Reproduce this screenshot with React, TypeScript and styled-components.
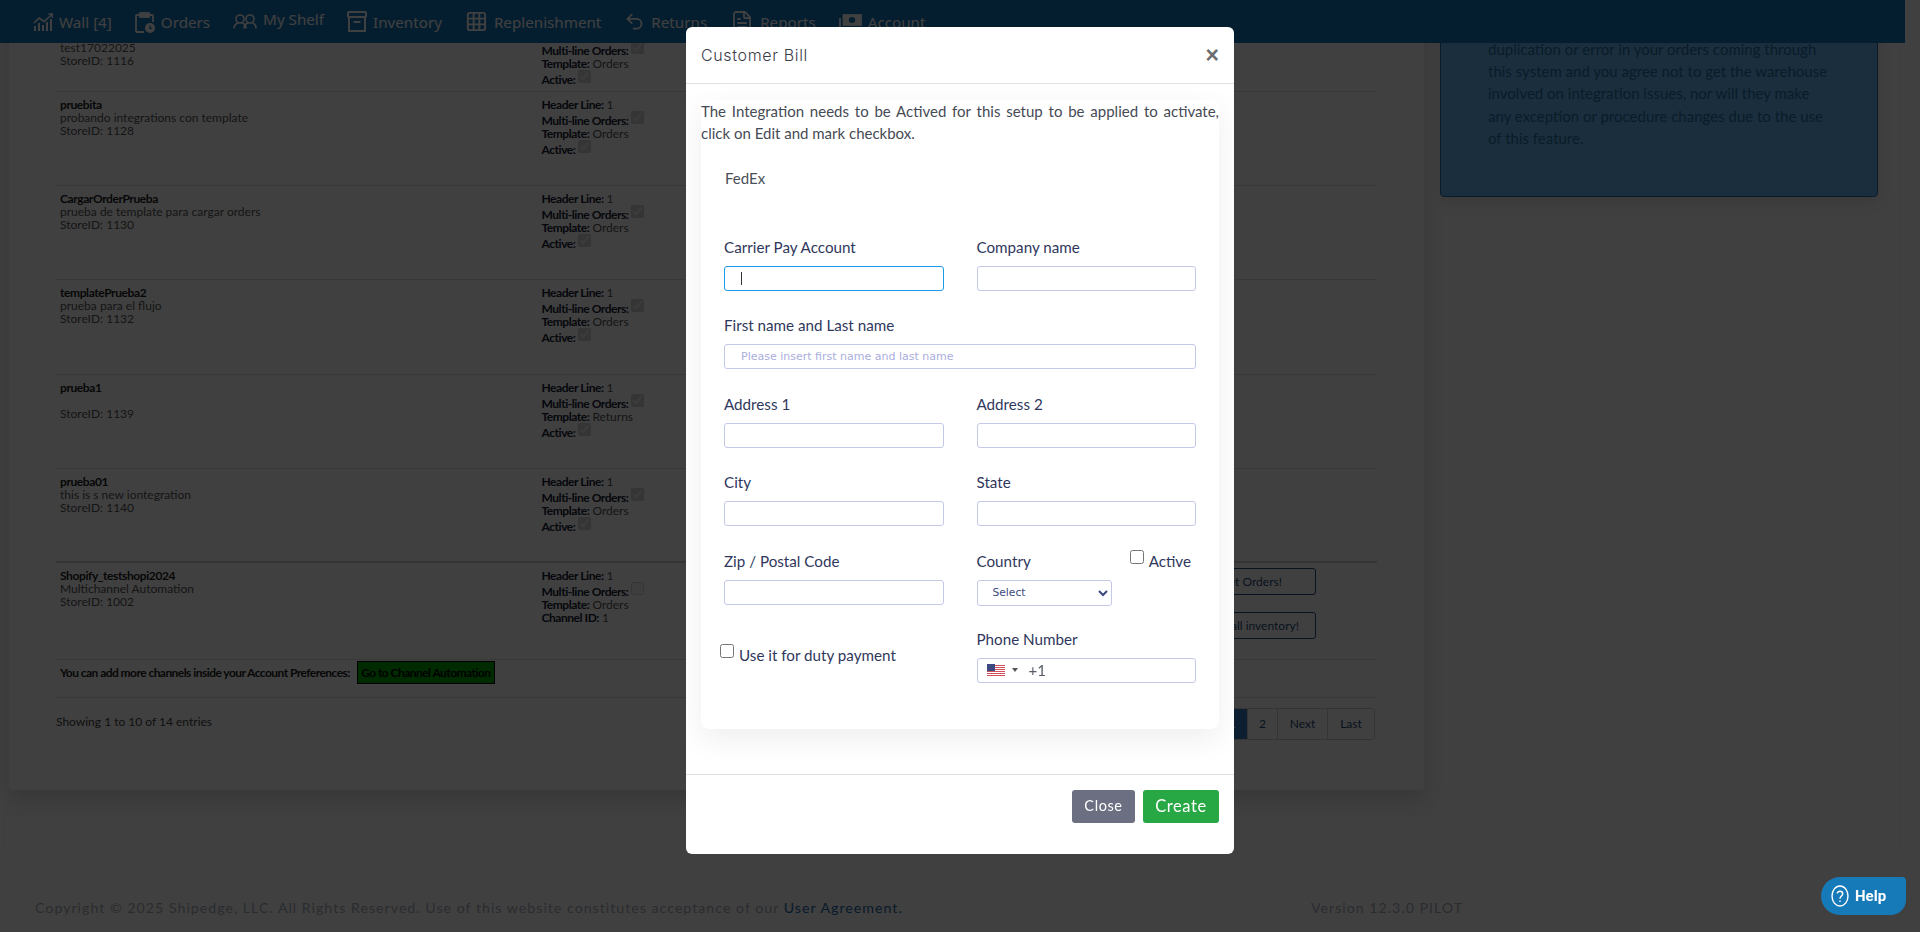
import React from "react"
import styled, { createGlobalStyle } from "styled-components"
import { Undo2, FileText, Grid3x3 } from "lucide-react"

const GlobalStyle = createGlobalStyle`
    html, body {
        margin: 0;
        padding: 0;
        height: 932px;
        overflow: hidden;
        background: #ffffff;
        font-family: "Lato", "Liberation Sans", sans-serif;
    }
    * { box-sizing: border-box; }
`

const Page = styled.div`
    width: 1905px;
    height: 932px;
    overflow: hidden;
`

const NavBar = styled.nav`
    position: fixed;
    top: 0;
    left: 0;
    width: 1905px;
    height: 43px;
    background: #1478bc;
    display: flex;
    align-items: center;
    padding-left: 21.5px;
    z-index: 1;
`

const NavItem = styled.a<{ $raised?: boolean }>`
    display: flex;
    align-items: center;
    gap: 6px;
    padding: 0 11.5px;
    color: #ffffff;
    font-family: "Noto Sans", sans-serif;
    font-size: 15.2px;
    white-space: nowrap;

    span {
        position: relative;
        top: ${props => props.$raised ? "-3px" : "0"};
    }
    svg {
        flex: none;
    }
`

const Panel = styled.div`
    margin: -100px 0 0 5px;
    width: 1894px;
    padding: 4px 21px 66px 4px;
    background: #fdfdfd;
    border-radius: 6px;
    display: grid;
    grid-template-columns: 1415px 438px;
    column-gap: 16px;
    align-items: start;
    box-shadow: 0 0 4px rgba(0, 0, 0, 0.05);
`

const ListCard = styled.section`
    background: #ffffff;
    border-radius: 4px;
    padding: 118px 47px 50px 47px;
    box-shadow: 0 10px 20px rgba(0, 0, 0, 0.14);
`

const Row = styled.div<{ $height: number; $strong?: boolean }>`
    height: ${props => props.$height}px;
    display: grid;
    grid-template-columns: 481.5px 1fr 130px;
    padding: 6px 61px 0 4px;
    border-bottom: ${props => props.$strong ? "2px solid #d4d4d4" : "1px solid #dddddd"};
    font-size: 12px;
    line-height: 13px;
    color: #222222;
`

const StoreName = styled.div`
    font-weight: 700;
    letter-spacing: -0.4px;
    color: #1c1c1c;
`

const Muted = styled.div`
    color: #555555;
    min-height: 13px;
`

const Detail = styled.div<{ $tall?: boolean }>`
    height: ${props => props.$tall ? "16px" : "13px"};
    display: flex;
    align-items: ${props => props.$tall ? "flex-end" : "center"};
    color: #555555;

    b {
        color: #162033;
        margin-right: 3px;
        letter-spacing: -0.45px;
    }
`

const TinyCheck = styled.input.attrs({ type: "checkbox", disabled: true })`
    width: 13px;
    height: 13px;
    margin: 0 0 3px 0;
    align-self: flex-start;
`

const RowActions = styled.div`
    display: flex;
    flex-direction: column;
    gap: 17px;
    margin-top: -1px;
`

const OutlineButton = styled.button`
    height: 27px;
    width: 130px;
    padding: 0;
    background: #ffffff;
    border: 1px solid #1f4b78;
    border-radius: 3px;
    color: #1f4b78;
    font-family: inherit;
    font-size: 12px;
`

const PrefsRow = styled.div`
    height: 38px;
    display: flex;
    align-items: flex-start;
    gap: 7px;
    padding: 1px 0 0 4px;
    border-bottom: 1px solid #dddddd;
    font-size: 12px;
    font-weight: 700;
    letter-spacing: -0.55px;
    line-height: 23px;
    color: #222222;
`

const GreenLink = styled.a`
    height: 23px;
    width: 138px;
    background: #00aa00;
    border: 1px solid #000000;
    color: #000000;
    text-align: center;
    line-height: 21px;
    white-space: nowrap;
    font-weight: 700;
`

const TableFoot = styled.div`
    display: flex;
    justify-content: space-between;
    align-items: flex-start;
    padding: 10px 2px 0 0;
    font-size: 12px;
`

const Showing = styled.div`
    color: #444444;
    line-height: 28px;
`

const Pager = styled.div`
    display: flex;
    height: 32px;
    border: 1px solid #cfcfcf;
    border-radius: 4px;
`

const PageLink = styled.a<{ $active?: boolean; $width: number }>`
    width: ${props => props.$width}px;
    display: flex;
    align-items: center;
    justify-content: center;
    color: ${props => props.$active ? "#ffffff" : "#1f4b78"};
    background: ${props => props.$active ? "#347ac0" : "transparent"};
    border-right: 1px solid #cfcfcf;

    &:last-child {
        border-right: 0;
    }
`

const InfoBox = styled.aside`
    margin-top: 56px;
    background: #68b8f8;
    border: 1px solid #2c6aa8;
    border-radius: 4px;
    padding: 77px 40px 47px 47px;
    font-size: 15px;
    line-height: 22.2px;
    color: #28709f;
    white-space: nowrap;
    box-shadow: 0 6px 14px rgba(0, 0, 0, 0.1);
`

const Footer = styled.footer`
    display: grid;
    grid-template-columns: 1276px 1fr;
    padding: 41px 0 0 35px;
    font-size: 14.2px;
    line-height: 22px;
    letter-spacing: 1px;
    color: #a8b0bc;

    a {
        color: #1f6aa8;
    }
`

const Backdrop = styled.div`
    position: fixed;
    inset: 0;
    background: rgba(0, 0, 0, 0.75);
    z-index: 2;
`

const HelpButton = styled.button`
    position: fixed;
    left: 1821px;
    top: 877px;
    width: 85px;
    height: 38px;
    display: flex;
    align-items: center;
    gap: 6px;
    padding: 0 0 0 10px;
    border: 0;
    border-radius: 20px 4px 16px 20px;
    background: #1679b8;
    color: #ffffff;
    font-family: "Roboto", "Liberation Sans", sans-serif;
    font-size: 15px;
    font-weight: 700;
    z-index: 3;
`

const Modal = styled.div`
    position: fixed;
    top: 27px;
    left: 686px;
    width: 548px;
    height: 827px;
    background: #ffffff;
    border-radius: 6px;
    z-index: 4;
    display: flex;
    flex-direction: column;
`

const ModalHeader = styled.header`
    height: 57px;
    flex: none;
    display: flex;
    align-items: center;
    justify-content: space-between;
    padding: 0 15px;
    border-bottom: 1px solid #dee2e6;
`

const ModalTitle = styled.h5`
    margin: 0;
    font-family: "Inter", sans-serif;
    font-size: 16px;
    font-weight: 300;
    letter-spacing: 0.65px;
    color: #3c3c48;
`

const CloseGlyph = styled.span`
    font-family: "Liberation Sans", sans-serif;
    font-size: 23px;
    font-weight: 700;
    line-height: 1;
    color: #6d6d6d;
`

const ModalBody = styled.div`
    flex: 1;
    padding: 16px 15px 0;
    border-bottom: 1px solid #dee2e6;
`

const FormCard = styled.div`
    height: 629px;
    border-radius: 8px;
    background: #ffffff;
    box-shadow: 0 10px 30px rgba(0, 0, 0, 0.07);
`

const Notice = styled.p`
    margin: 0;
    font-size: 15px;
    line-height: 22px;
    text-align: justify;
    color: #464a55;
`

const Carrier = styled.div`
    padding: 23px 0 47px 24px;
    font-size: 15px;
    line-height: 22px;
    color: #495057;
`

const FormGrid = styled.div`
    display: grid;
    grid-template-columns: 219.5px 219.5px;
    column-gap: 33px;
    padding: 0 23px;
`

const Field = styled.div<{ $wide?: boolean }>`
    height: 78.4px;
    grid-column: ${props => props.$wide ? "1 / -1" : "auto"};
`

const Label = styled.label`
    display: block;
    margin-bottom: 8px;
    font-size: 15.2px;
    line-height: 22px;
    color: #2f375c;
    white-space: nowrap;
`

const TextInput = styled.input<{ $focused?: boolean }>`
    display: block;
    width: 100%;
    height: 25px;
    padding: 0 16px;
    background: #ffffff;
    border: 1px solid ${props => props.$focused ? "#1a9be8" : "#c5c9e8"};
    border-radius: 3px;
    outline: 0;
    font-family: "DejaVu Sans", sans-serif;
    font-size: 11px;

    &::placeholder {
        color: #a9aedd;
        opacity: 1;
    }
`

const InputCaretWrap = styled.div`
    position: relative;

    &::after {
        content: "";
        position: absolute;
        left: 17px;
        top: 6px;
        width: 1px;
        height: 13px;
        background: #333333;
    }
`

const CountryCell = styled.div`
    display: flex;
    justify-content: space-between;
    height: 78.4px;
`

const CountrySelect = styled.select`
    display: block;
    width: 135px;
    height: 26px;
    padding: 0 0 0 11px;
    background: #ffffff;
    border: 1px solid #c5c9e8;
    border-radius: 3px;
    font-family: "DejaVu Sans", sans-serif;
    font-size: 10.7px;
    color: #3b4a80;
`

const ActiveLabel = styled.label`
    display: flex;
    align-items: flex-start;
    gap: 5px;
    padding: 0 5px 0 0;
    font-size: 15.2px;
    line-height: 22px;
    color: #2f375c;
`

const PlainCheck = styled.input.attrs({ type: "checkbox" })`
    width: 14px;
    height: 14px;
    margin: 0;
`

const DutyCell = styled.label`
    display: flex;
    align-items: flex-start;
    gap: 5px;
    height: 78.4px;
    margin-left: -4px;
    padding-top: 16px;
    font-size: 15.2px;
    line-height: 22px;
    color: #2f375c;
`

const PhoneBox = styled.div`
    height: 25px;
    display: flex;
    align-items: center;
    padding-left: 9px;
    border: 1px solid #c5c9e8;
    border-radius: 3px;
    font-size: 15px;
    color: #555a66;
`

const FlagCaret = styled.span`
    width: 0;
    height: 0;
    margin: 0 11px 0 7px;
    border-left: 3px solid transparent;
    border-right: 3px solid transparent;
    border-top: 4px solid #555555;
`

const ModalFooter = styled.footer`
    height: 79px;
    flex: none;
    display: flex;
    justify-content: flex-end;
    gap: 8px;
    padding: 15px 15px 0;
`

const FooterButton = styled.button<{ $primary?: boolean }>`
    height: 33px;
    width: ${props => props.$primary ? "76px" : "63px"};
    padding: 0 0 2px;
    border: 0;
    border-radius: 3px;
    background: ${props => props.$primary ? "#28a745" : "#6c6f82"};
    color: #ffffff;
    font-family: "Lato", sans-serif;
    font-size: ${props => props.$primary ? "16.5px" : "14.5px"};
    letter-spacing: 0.6px;
`

function WallIcon() {
    return (
        <svg width="20" height="18" viewBox="0 0 20 18" fill="none" stroke="#fff" strokeWidth="1.6">
            <path d="M1 10 L6 5 L11 8.5 L19 1.5" />
            <path d="M15.5 1 H19.5 V5" />
            <path d="M2 18 V13 M6 18 V10 M10 18 V12 M14 18 V9 M18 18 V6" strokeWidth="2" />
        </svg>
    )
}

function OrdersIcon() {
    return (
        <svg width="20" height="22" viewBox="0 0 20 22" fill="none" stroke="#fff" strokeWidth="1.8">
            <path d="M5 4 H2 a1 1 0 0 0 -1 1 V20 a1 1 0 0 0 1 1 H9 M14 4 H17 a1 1 0 0 1 1 1 V11" />
            <rect x="5" y="2" width="9" height="4" fill="#fff" />
            <circle cx="15" cy="17" r="5" fill="#fff" stroke="none" />
            <path d="M15 14.5 V17.3 H17.3" stroke="#1478bc" strokeWidth="1.2" />
        </svg>
    )
}

function ShelfIcon() {
    return (
        <svg width="24" height="15" viewBox="0 0 24 15" fill="none" stroke="#fff" strokeWidth="1.6">
            <circle cx="7" cy="5" r="4" />
            <circle cx="17" cy="5" r="4" />
            <path d="M1 14.5 C1 10.5 3.5 9.5 5 9 M13 14.5 C13 10.5 11 9.5 9.5 9" />
            <path d="M11 14.5 C11 10.5 13.5 9.5 15 9 M23 14.5 C23 10.5 21 9.5 19.5 9" />
        </svg>
    )
}

function InventoryIcon() {
    return (
        <svg width="20" height="21" viewBox="0 0 20 21" fill="none" stroke="#fff" strokeWidth="2">
            <rect x="1" y="1" width="18" height="5" rx="1" />
            <path d="M2 6 V20 H18 V6" />
            <path d="M6.5 11 H13.5" />
        </svg>
    )
}

function AccountIcon() {
    return (
        <svg width="23" height="16" viewBox="0 0 23 16" fill="none" stroke="#fff" strokeWidth="1.8">
            <rect x="4.5" y="1" width="17.5" height="10" fill="#fff" />
            <ellipse cx="13" cy="6" rx="3.2" ry="3" fill="#1478bc" stroke="none" />
            <path d="M1 4 V15 H18" />
        </svg>
    )
}

function UsFlag() {
    return (
        <svg width="18" height="13" viewBox="0 0 18 13">
            <rect width="18" height="13" fill="#ffffff" />
            <path d="M0 1h18v1H0zM0 3h18v1H0zM0 5h18v1H0zM0 7h18v1H0zM0 9h18v1H0zM0 11h18v1H0z" fill="#d0505c" />
            <rect width="8" height="7" fill="#3c4a80" />
        </svg>
    )
}

function HelpIcon() {
    return (
        <svg width="18" height="22" viewBox="0 0 18 22" fill="none" stroke="#fff" strokeWidth="1.4">
            <ellipse cx="9" cy="11" rx="8" ry="10" />
            <path d="M6.3 8.5 C6.3 5.5 11.7 5.5 11.7 8.7 C11.7 11 9 11 9 13.8" />
            <path d="M9 15.6 V17" />
        </svg>
    )
}

interface Store {
    name: string
    note: string
    id: number
    template: string
    height: number
}

const stores: Store[] = [
    { name: "test", note: "test17022025", id: 1116, template: "Orders", height: 70 },
    { name: "pruebita", note: "probando integrations con template", id: 1128, template: "Orders", height: 94.2 },
    { name: "CargarOrderPrueba", note: "prueba de template para cargar orders", id: 1130, template: "Orders", height: 94.2 },
    { name: "templatePrueba2", note: "prueba para el flujo", id: 1132, template: "Orders", height: 94.2 },
    { name: "prueba1", note: "", id: 1139, template: "Returns", height: 94.2 },
    { name: "prueba01", note: "this is s new iontegration", id: 1140, template: "Orders", height: 94.2 },
]

export default function App() {
    return (
        <Page>
            <GlobalStyle />
            <NavBar>
                <NavItem><WallIcon /><span>Wall [4]</span></NavItem>
                <NavItem><OrdersIcon /><span>Orders</span></NavItem>
                <NavItem $raised><ShelfIcon /><span>My Shelf</span></NavItem>
                <NavItem><InventoryIcon /><span>Inventory</span></NavItem>
                <NavItem><Grid3x3 size={23} color="#fff" strokeWidth={2} /><span>Replenishment</span></NavItem>
                <NavItem><Undo2 size={21} color="#fff" strokeWidth={2} /><span>Returns</span></NavItem>
                <NavItem><FileText size={24} color="#fff" strokeWidth={1.8} /><span>Reports</span></NavItem>
                <NavItem><AccountIcon /><span>Account</span></NavItem>
            </NavBar>

            <Panel>
                <ListCard>
                    {stores.map(store => (
                        <Row key={store.id} $height={store.height} $strong={store.id === 1140}>
                            <div>
                                <StoreName>{store.name}</StoreName>
                                <Muted>{store.note}</Muted>
                                <Muted>StoreID: {store.id}</Muted>
                            </div>
                            <div>
                                <Detail><b>Header Line:</b> 1</Detail>
                                <Detail $tall><b>Multi-line Orders:</b><TinyCheck defaultChecked /></Detail>
                                <Detail><b>Template:</b> {store.template}</Detail>
                                <Detail $tall><b>Active:</b><TinyCheck defaultChecked /></Detail>
                            </div>
                        </Row>
                    ))}
                    <Row $height={96.6}>
                        <div>
                            <StoreName>Shopify_testshopi2024</StoreName>
                            <Muted>Multichannel Automation</Muted>
                            <Muted>StoreID: 1002</Muted>
                        </div>
                        <div>
                            <Detail><b>Header Line:</b> 1</Detail>
                            <Detail $tall><b>Multi-line Orders:</b><TinyCheck /></Detail>
                            <Detail><b>Template:</b> Orders</Detail>
                            <Detail><b>Channel ID:</b> 1</Detail>
                        </div>
                        <RowActions>
                            <OutlineButton>Get Orders!</OutlineButton>
                            <OutlineButton>Sync all inventory!</OutlineButton>
                        </RowActions>
                    </Row>
                    <PrefsRow>
                        You can add more channels inside your Account Preferences:
                        <GreenLink>Go to Channel Automation</GreenLink>
                    </PrefsRow>
                    <TableFoot>
                        <Showing>Showing 1 to 10 of 14 entries</Showing>
                        <Pager>
                            <PageLink $width={40}>First</PageLink>
                            <PageLink $width={60}>Previous</PageLink>
                            <PageLink $width={30} $active>1</PageLink>
                            <PageLink $width={30}>2</PageLink>
                            <PageLink $width={50}>Next</PageLink>
                            <PageLink $width={46}>Last</PageLink>
                        </Pager>
                    </TableFoot>
                </ListCard>
                <InfoBox>
                    duplication or error in your orders coming through<br />
                    this system and you agree not to get the warehouse<br />
                    involved on integration issues, nor will they make<br />
                    any exception or procedure changes due to the use<br />
                    of this feature.
                </InfoBox>
            </Panel>

            <Footer>
                <div>Copyright © 2025 Shipedge, LLC. All Rights Reserved. Use of this website constitutes acceptance of our <a>User Agreement.</a></div>
                <div>Version 12.3.0 PILOT</div>
            </Footer>

            <Backdrop />
            <HelpButton><HelpIcon />Help</HelpButton>

            <Modal>
                <ModalHeader>
                    <ModalTitle>Customer Bill</ModalTitle>
                    <CloseGlyph>×</CloseGlyph>
                </ModalHeader>
                <ModalBody>
                    <FormCard>
                        <Notice>The Integration needs to be Actived for this setup to be applied to activate, click on Edit and mark checkbox.</Notice>
                        <Carrier>FedEx</Carrier>
                        <FormGrid>
                            <Field>
                                <Label>Carrier Pay Account</Label>
                                <InputCaretWrap><TextInput $focused /></InputCaretWrap>
                            </Field>
                            <Field>
                                <Label>Company name</Label>
                                <TextInput />
                            </Field>
                            <Field $wide>
                                <Label>First name and Last name</Label>
                                <TextInput placeholder="Please insert first name and last name" />
                            </Field>
                            <Field>
                                <Label>Address 1</Label>
                                <TextInput />
                            </Field>
                            <Field>
                                <Label>Address 2</Label>
                                <TextInput />
                            </Field>
                            <Field>
                                <Label>City</Label>
                                <TextInput />
                            </Field>
                            <Field>
                                <Label>State</Label>
                                <TextInput />
                            </Field>
                            <Field>
                                <Label>Zip / Postal Code</Label>
                                <TextInput />
                            </Field>
                            <CountryCell>
                                <div>
                                    <Label>Country</Label>
                                    <CountrySelect><option>Select</option></CountrySelect>
                                </div>
                                <ActiveLabel><PlainCheck />Active</ActiveLabel>
                            </CountryCell>
                            <DutyCell><PlainCheck />Use it for duty payment</DutyCell>
                            <Field>
                                <Label>Phone Number</Label>
                                <PhoneBox><UsFlag /><FlagCaret />+1</PhoneBox>
                            </Field>
                        </FormGrid>
                    </FormCard>
                </ModalBody>
                <ModalFooter>
                    <FooterButton>Close</FooterButton>
                    <FooterButton $primary>Create</FooterButton>
                </ModalFooter>
            </Modal>
        </Page>
    )
}
